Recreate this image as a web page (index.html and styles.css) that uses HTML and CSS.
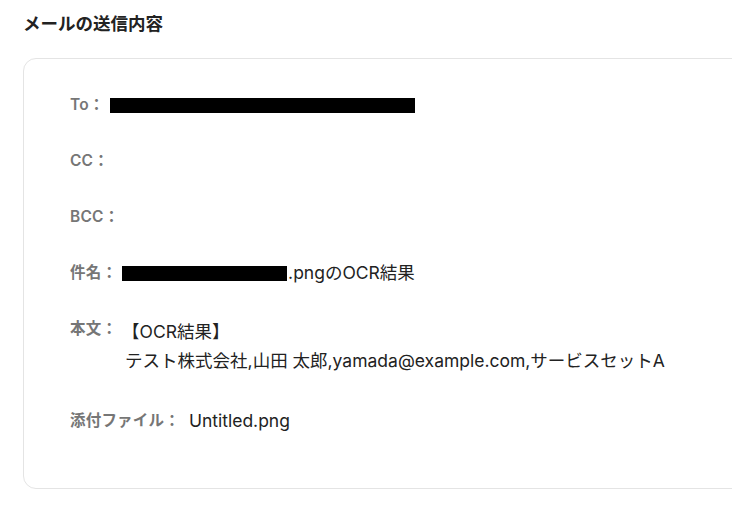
FILE: index.html
```html
<!DOCTYPE html>
<html lang="ja">
<head>
	<meta charset="UTF-8">
	<meta name="viewport" content="width=device-width, initial-scale=1.0">
	<title>メールの送信内容</title>
	<link rel="stylesheet" href="styles.css">
</head>
<body>
	<div class="page">
		<h2 class="title">メールの送信内容</h2>
		<div class="mail">
			<div class="mail__row">
				<span class="mail__label">To：</span>
				<span class="mail__value"><span class="redact redact--to"></span></span>
			</div>
			<div class="mail__row">
				<span class="mail__label">CC：</span>
			</div>
			<div class="mail__row">
				<span class="mail__label">BCC：</span>
			</div>
			<div class="mail__row">
				<span class="mail__label">件名：</span>
				<span class="mail__value"><span class="redact redact--subject"></span>.pngのOCR結果</span>
			</div>
			<div class="mail__row mail__row--body">
				<span class="mail__label">本文：</span>
				<div class="mail__value mail__value--body">
					<div class="mail__line mail__line--bracket">【OCR結果】</div>
					<div class="mail__line">テスト株式会社,山田 太郎,yamada@example.com,サービスセットA</div>
				</div>
			</div>
			<div class="mail__row mail__row--file">
				<span class="mail__label">添付ファイル：</span>
				<span class="mail__value mail__value--file">Untitled.png</span>
			</div>
		</div>
	</div>
</body>
</html>
```

FILE: styles.css
```css
* { box-sizing: border-box }
body {
	margin: 0;
	background: #fff;
	color: #222;
	font-family: Inter, 'Noto Sans CJK JP', sans-serif;
	overflow: hidden;
}
.page {
	padding: 0 0 0 23px;
}
.title {
	margin: 0;
	padding-top: 13px;
	font-size: 17.5px;
	line-height: 22px;
	font-weight: 700;
	color: #222;
}
.mail {
	width: 760px;
	margin-top: 23px;
	padding: 34px 0 55px 46px;
	border: 1px solid #e4e4e4;
	border-radius: 13px;
	display: flex;
	flex-direction: column;
	gap: 32px;
}
.mail__row {
	display: flex;
	align-items: center;
	height: 24px;
	font-size: 15.5px;
	line-height: 24px;
}
.mail__row--body {
	height: auto;
	align-items: flex-start;
}
.mail__row--file {
	margin-top: 2px;
}
.mail__label {
	color: #767676;
	font-weight: 600;
	letter-spacing: .2px;
}
.mail__value {
	display: flex;
	align-items: center;
	color: #222;
	font-size: 17.5px;
	margin-left: 5px;
}
.mail__value--body {
	display: block;
	margin-left: 8px;
}
.mail__line {
	line-height: 29px;
}
.mail__line--bracket {
	margin-left: -3px;
}
.mail__value--file {
	margin-left: 9px;
}
.redact {
	display: inline-block;
	height: 15px;
	background: #000;
}
.redact--to {
	width: 305px;
}
.redact--subject {
	width: 165px;
	margin-right: 1px;
}
```
